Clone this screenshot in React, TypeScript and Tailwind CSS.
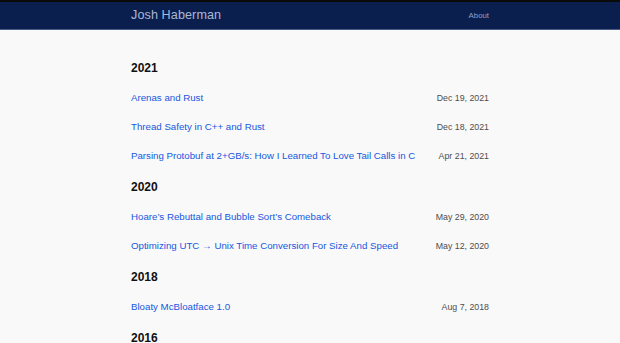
import React from "react";

type Post = { title: string; date: string };
type Section = { year: string; posts: Post[] };

const sections: Section[] = [
  {
    year: "2021",
    posts: [
      { title: "Arenas and Rust", date: "Dec 19, 2021" },
      { title: "Thread Safety in C++ and Rust", date: "Dec 18, 2021" },
      { title: "Parsing Protobuf at 2+GB/s: How I Learned To Love Tail Calls in C", date: "Apr 21, 2021" },
    ],
  },
  {
    year: "2020",
    posts: [
      { title: "Hoare’s Rebuttal and Bubble Sort’s Comeback", date: "May 29, 2020" },
      { title: "Optimizing UTC → Unix Time Conversion For Size And Speed", date: "May 12, 2020" },
    ],
  },
  {
    year: "2018",
    posts: [{ title: "Bloaty McBloatface 1.0", date: "Aug 7, 2018" }],
  },
  {
    year: "2016",
    posts: [],
  },
];

export default function App() {
  return (
    <div
      className="h-[343px] overflow-hidden bg-[#f9f9f9]"
      style={{ fontFamily: '"Liberation Sans", Arial, sans-serif' }}
    >
      <header className="bg-[#0b1f4f] border-t-[2px] border-t-[#0a0a0a] border-b border-b-[#4a5c86]">
        <div className="mx-auto w-[358px] h-[27px] flex items-center justify-between">
          <span className="text-[12.6px] text-[#a9b8d6] tracking-[0.1px]">Josh Haberman</span>
          <span className="text-[7.8px] text-[#8f9fc4]">About</span>
        </div>
      </header>
      <main className="mx-auto w-[358px] pt-[22px]">
        {sections.map((s) => (
          <section key={s.year}>
            <h2 className="h-[32px] flex items-center text-[12px] font-bold text-[#111]">{s.year}</h2>
            {s.posts.map((p) => (
              <div key={p.title} className="h-[29px] flex items-center justify-between">
                <a className="text-[9.7px] text-[#1757e0]">{p.title}</a>
                <span className="text-[8.8px] text-[#4d4d4d]">{p.date}</span>
              </div>
            ))}
          </section>
        ))}
      </main>
    </div>
  );
}
